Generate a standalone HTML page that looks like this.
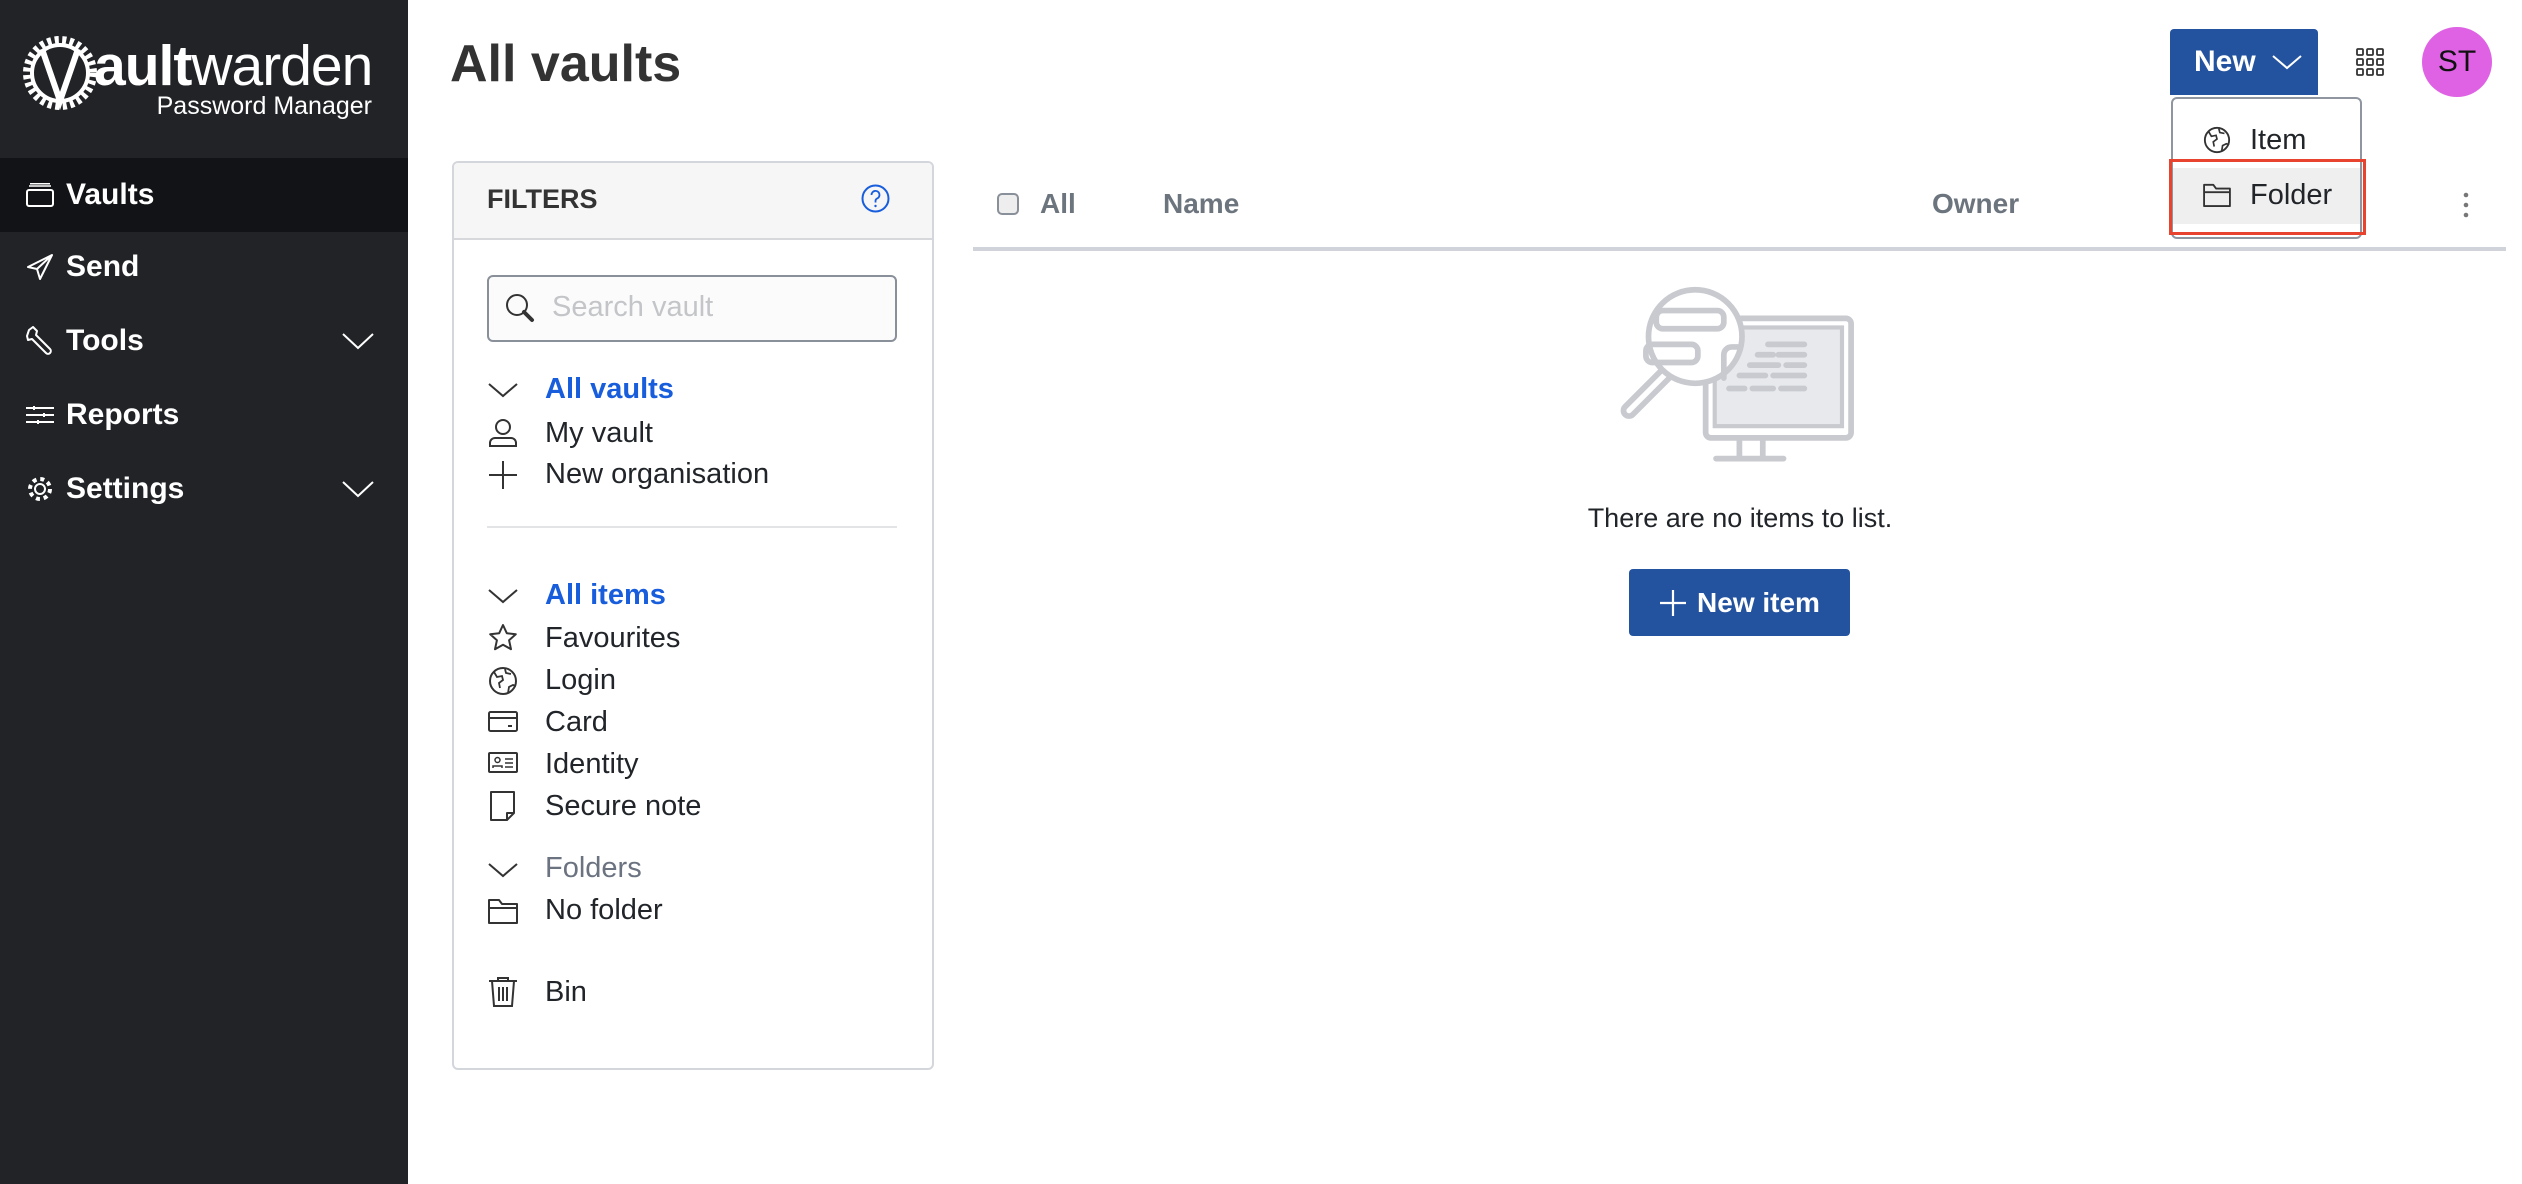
<!DOCTYPE html>
<html><head><meta charset="utf-8"><style>
*{box-sizing:border-box;margin:0;padding:0}
body{width:2522px;height:1184px;background:#fff;font-family:"Liberation Sans",sans-serif;position:relative;overflow:hidden;color:#212529}
.abs{position:absolute}
#side{left:0;top:0;width:408px;height:1184px;background:#212327}
.nav{position:absolute;left:0;width:408px;height:74px;color:#fff;font-weight:bold;font-size:30px;display:flex;align-items:center;padding-left:66px}
.nav svg{position:absolute;left:26px}
.chev{position:absolute;left:342px}
.fi{position:absolute;left:545px;font-size:29px;color:#212529;line-height:34px}
.ic{position:absolute;left:488px}
</style></head><body>
<div id="side" class="abs">
  <svg class="abs" style="left:22px;top:35px" width="76" height="76" viewBox="0 0 76 76">
    <circle cx="38" cy="38" r="33" fill="none" stroke="#fff" stroke-width="8" stroke-dasharray="4 3.5"/>
    <circle cx="38" cy="38" r="28" fill="none" stroke="#fff" stroke-width="4"/>
    <path d="M20 14 L38 66 L56 14" fill="none" stroke="#fff" stroke-width="6"/>
  </svg>
  <div class="abs" style="left:94px;top:36px;color:#fff;font-size:57px;line-height:60px;letter-spacing:-1px"><b>ault</b>warden</div>
  <div class="abs" style="left:150px;top:92px;width:222px;text-align:right;color:#fff;font-size:25px;line-height:28px">Password Manager</div>
  <div class="nav" style="top:158px;background:#121316">
    <svg width="28" height="24" viewBox="0 0 28 24"><rect x="1" y="7" width="26" height="16" rx="2" fill="none" stroke="#fff" stroke-width="2"/><path d="M3 3h22M4 0.8h20" stroke="#fff" stroke-width="1.5"/></svg>Vaults</div>
  <div class="nav" style="top:230px">
    <svg width="28" height="28" viewBox="0 0 28 28"><path d="M26 2L2 14l9 2 3 10z M11 16L26 2" fill="none" stroke="#fff" stroke-width="2" stroke-linejoin="round"/></svg>Send</div>
  <div class="nav" style="top:304px">
    <svg width="28" height="30" viewBox="0 0 28 30"><path d="M3 4l4-3 4 4-1 4 14 14a2 2 0 0 1-4 4L6 13l-4 1-1-4z" fill="none" stroke="#fff" stroke-width="2" stroke-linejoin="round"/></svg>Tools
    <svg class="chev" style="left:342px" width="32" height="18" viewBox="0 0 32 18"><path d="M1 2l15 14 15-14" fill="none" stroke="#fff" stroke-width="2"/></svg></div>
  <div class="nav" style="top:378px">
    <svg width="28" height="24" viewBox="0 0 28 24"><path d="M0 5h28M0 12h28M0 19h28" stroke="#fff" stroke-width="2"/><path d="M8 3v4M18 10v4M12 17v4" stroke="#fff" stroke-width="2"/></svg>Reports</div>
  <div class="nav" style="top:452px">
    <svg width="28" height="28" viewBox="0 0 28 28"><circle cx="14" cy="14" r="5" fill="none" stroke="#fff" stroke-width="2"/><circle cx="14" cy="14" r="10" fill="none" stroke="#fff" stroke-width="4" stroke-dasharray="4 3.85"/></svg>Settings
    <svg class="chev" style="left:342px" width="32" height="18" viewBox="0 0 32 18"><path d="M1 2l15 14 15-14" fill="none" stroke="#fff" stroke-width="2"/></svg></div>
</div>

<div class="abs" style="left:450px;top:31px;font-size:52px;font-weight:bold;color:#333;line-height:66px">All vaults</div>

<!-- filters -->
<div class="abs" style="left:452px;top:161px;width:482px;height:909px;border:2px solid #d3d6db;border-radius:6px;overflow:hidden">
  <div style="height:77px;background:#f6f6f6;border-bottom:2px solid #d6d8db"></div>
</div>
<div class="abs" style="left:487px;top:182px;font-size:27px;font-weight:bold;color:#333;line-height:34px">FILTERS</div>
<svg class="abs" style="left:861px;top:184px" width="29" height="29" viewBox="0 0 29 29"><circle cx="14.5" cy="14.5" r="13" fill="none" stroke="#175ddc" stroke-width="2"/><path d="M10.5 11a4 4 0 1 1 5.5 3.6c-1 .5-1.5 1.2-1.5 2.4v1.5" fill="none" stroke="#175ddc" stroke-width="1.8"/><circle cx="14.5" cy="22" r="1.2" fill="#175ddc"/></svg>
<div class="abs" style="left:487px;top:275px;width:410px;height:67px;border:2px solid #8a9099;border-radius:6px;background:#fbfbfb"></div>
<svg class="abs" style="left:504px;top:292px" width="32" height="32" viewBox="0 0 32 32"><circle cx="13" cy="13" r="10" fill="none" stroke="#333" stroke-width="2"/><path d="M20 20l8 8" stroke="#333" stroke-width="4" stroke-linecap="round"/></svg>
<div class="abs" style="left:552px;top:291px;font-size:29px;color:#c3c5c8">Search vault</div>

<svg class="ic" style="top:382px" width="30" height="16" viewBox="0 0 30 16"><path d="M1 2l14 12 14-12" fill="none" stroke="#333" stroke-width="2"/></svg>
<div class="fi" style="top:372px;color:#175ddc;font-weight:bold">All vaults</div>
<svg class="ic" style="top:418px" width="30" height="30" viewBox="0 0 30 30"><circle cx="15" cy="9" r="7" fill="none" stroke="#333" stroke-width="2"/><path d="M2 28v-3a5 5 0 0 1 5-5h16a5 5 0 0 1 5 5v3z" fill="none" stroke="#333" stroke-width="2"/></svg>
<div class="fi" style="top:416px">My vault</div>
<svg class="ic" style="top:460px" width="30" height="30" viewBox="0 0 30 30"><path d="M15 1v28M1 15h28" stroke="#333" stroke-width="2"/></svg>
<div class="fi" style="top:457px">New organisation</div>
<div class="abs" style="left:487px;top:526px;width:410px;height:2px;background:#e3e4e6"></div>

<svg class="ic" style="top:588px" width="30" height="16" viewBox="0 0 30 16"><path d="M1 2l14 12 14-12" fill="none" stroke="#333" stroke-width="2"/></svg>
<div class="fi" style="top:578px;color:#175ddc;font-weight:bold">All items</div>
<svg class="ic" style="top:623px" width="30" height="30" viewBox="0 0 30 30"><path d="M15 2l3.8 8.2 9 1-6.7 6.1 1.9 8.9L15 21.7 7 26.2l1.9-8.9L2.2 11.2l9-1z" fill="none" stroke="#333" stroke-width="2" stroke-linejoin="round"/></svg>
<div class="fi" style="top:621px">Favourites</div>
<svg class="ic" style="top:666px" width="30" height="30" viewBox="0 0 30 30"><circle cx="15" cy="15" r="13" fill="none" stroke="#333" stroke-width="2"/><path d="M6 6l3 5 5-1 1 4-4 3 1 5M17 3l1 4 5 1M20 27l1-6 4-2 3 1" fill="none" stroke="#333" stroke-width="1.8"/></svg>
<div class="fi" style="top:663px">Login</div>
<svg class="ic" style="top:711px" width="30" height="22" viewBox="0 0 30 22"><rect x="1" y="1" width="28" height="19" rx="1.5" fill="none" stroke="#333" stroke-width="2"/><path d="M1 7h28M20 15h4" stroke="#333" stroke-width="2"/></svg>
<div class="fi" style="top:705px">Card</div>
<svg class="ic" style="top:752px" width="30" height="22" viewBox="0 0 30 22"><rect x="1" y="1" width="28" height="19" rx="1" fill="none" stroke="#333" stroke-width="2"/><circle cx="9.5" cy="8" r="2.5" fill="none" stroke="#333" stroke-width="1.5"/><path d="M5 16v-2h9v2M17 7h8M17 11h8M17 15h8" fill="none" stroke="#333" stroke-width="1.5"/></svg>
<div class="fi" style="top:747px">Identity</div>
<svg class="ic" style="top:791px" width="30" height="30" viewBox="0 0 30 30"><path d="M3 1h23v21l-7 7H3z M26 22h-7v7" fill="none" stroke="#333" stroke-width="2" stroke-linejoin="round"/></svg>
<div class="fi" style="top:789px">Secure note</div>
<svg class="ic" style="top:862px" width="30" height="16" viewBox="0 0 30 16"><path d="M1 2l14 12 14-12" fill="none" stroke="#333" stroke-width="2"/></svg>
<div class="fi" style="top:851px;color:#6b7280">Folders</div>
<svg class="ic" style="top:898px" width="30" height="26" viewBox="0 0 30 26"><path d="M1 2h10l3 4h15v19H1z M1 10h28" fill="none" stroke="#333" stroke-width="2" stroke-linejoin="round"/></svg>
<div class="fi" style="top:893px">No folder</div>
<svg class="ic" style="top:977px" width="30" height="30" viewBox="0 0 30 30"><path d="M1 4h28M10 4V1h10v3M4 4l2 25h18l2-25M11 10v14M15 10v14M19 10v14" fill="none" stroke="#333" stroke-width="2"/></svg>
<div class="fi" style="top:975px">Bin</div>

<!-- table header -->
<div class="abs" style="left:997px;top:193px;width:22px;height:22px;border:2px solid #8a9099;border-radius:5px;background:#eee"></div>
<div class="abs" style="left:1040px;top:188px;font-size:28px;font-weight:bold;color:#6c747e">All</div>
<div class="abs" style="left:1163px;top:188px;font-size:28px;font-weight:bold;color:#6c747e">Name</div>
<div class="abs" style="left:1932px;top:188px;font-size:28px;font-weight:bold;color:#6c747e">Owner</div>
<svg class="abs" style="left:2462px;top:192px" width="8" height="26" viewBox="0 0 8 26"><circle cx="4" cy="3" r="2.3" fill="#777"/><circle cx="4" cy="13" r="2.3" fill="#777"/><circle cx="4" cy="23" r="2.3" fill="#777"/></svg>
<div class="abs" style="left:973px;top:247px;width:1533px;height:4px;background:#d0d3da"></div>

<!-- illustration -->
<svg class="abs" style="left:1612px;top:282px" width="260" height="200" viewBox="0 0 100 77">
  <g fill="none" stroke="#c8cacf" stroke-width="2.2" stroke-linecap="round">
  <rect x="36" y="14" width="56" height="46" rx="2"/>
  <rect x="39.5" y="17.5" width="49" height="38" fill="#e7e9ec" stroke-width="1.6"/>
  <path d="M49 60v7M58 60v7M40 68h26"/>
  <path d="M60 24h14M56 28h6M64 28h10M53 32h11M67 32h7M49 36h10M62 36h12M45 41h6M54 41h8M65 41h9"/>
  <circle cx="32" cy="21" r="18" fill="#fff"/>
  <rect x="17" y="11" width="26" height="7" rx="2.5"/>
  <rect x="13" y="24" width="20" height="7" rx="2.5"/>
  <path d="M43 37v-9a3 3 0 0 1 3-3h3"/>
  <path d="M19 34L5 48a2 2 0 0 0 3 3l14-14"/>
  </g>
</svg>
<div class="abs" style="left:1460px;top:503px;width:560px;text-align:center;font-size:27px;color:#212529">There are no items to list.</div>
<div class="abs" style="left:1629px;top:569px;width:221px;height:67px;background:#23529f;border-radius:4px;color:#fff;font-weight:bold;font-size:28px;display:flex;align-items:center;justify-content:center">
  <svg width="28" height="28" viewBox="0 0 28 28" style="margin-right:10px"><path d="M14 1v26M1 14h26" stroke="#fff" stroke-width="2.2"/></svg>New item</div>

<!-- top right -->
<div class="abs" style="left:2170px;top:29px;width:148px;height:66px;background:#23529f;border-radius:4px 4px 0 0;color:#fff;font-weight:bold;font-size:30px;display:flex;align-items:center;padding-left:24px">New
  <svg width="30" height="16" viewBox="0 0 30 16" style="margin-left:16px"><path d="M1 2l14 12 14-12" fill="none" stroke="#fff" stroke-width="2"/></svg></div>
<svg class="abs" style="left:2356px;top:48px" width="28" height="28" viewBox="0 0 28 28"><g fill="none" stroke="#333" stroke-width="1.8"><rect x="1" y="1" width="6" height="6" rx="1"/><rect x="11" y="1" width="6" height="6" rx="1"/><rect x="21" y="1" width="6" height="6" rx="1"/><rect x="1" y="11" width="6" height="6" rx="1"/><rect x="11" y="11" width="6" height="6" rx="1"/><rect x="21" y="11" width="6" height="6" rx="1"/><rect x="1" y="21" width="6" height="6" rx="1"/><rect x="11" y="21" width="6" height="6" rx="1"/><rect x="21" y="21" width="6" height="6" rx="1"/></g></svg>
<div class="abs" style="left:2422px;top:27px;width:70px;height:70px;border-radius:50%;background:#de62e3;color:#111;font-size:30px;display:flex;align-items:center;justify-content:center">ST</div>

<div class="abs" style="left:2171px;top:97px;width:191px;height:142px;border:2px solid #8f96a0;border-radius:6px;background:#fff"></div>
<div class="abs" style="left:2173px;top:168px;width:187px;height:56px;background:#efefef"></div>
<svg class="abs" style="left:2203px;top:126px" width="28" height="28" viewBox="0 0 30 30"><circle cx="15" cy="15" r="13" fill="none" stroke="#333" stroke-width="2"/><path d="M6 6l3 5 5-1 1 4-4 3 1 5M17 3l1 4 5 1M20 27l1-6 4-2 3 1" fill="none" stroke="#333" stroke-width="1.8"/></svg>
<div class="abs" style="left:2250px;top:124px;font-size:29px;color:#212529">Item</div>
<svg class="abs" style="left:2203px;top:183px" width="28" height="24" viewBox="0 0 30 26"><path d="M1 2h10l3 4h15v19H1z M1 10h28" fill="none" stroke="#333" stroke-width="2" stroke-linejoin="round"/></svg>
<div class="abs" style="left:2250px;top:179px;font-size:29px;color:#212529">Folder</div>
<div class="abs" style="left:2169px;top:159px;width:197px;height:76px;border:3px solid #e8432f"></div>
</body></html>
